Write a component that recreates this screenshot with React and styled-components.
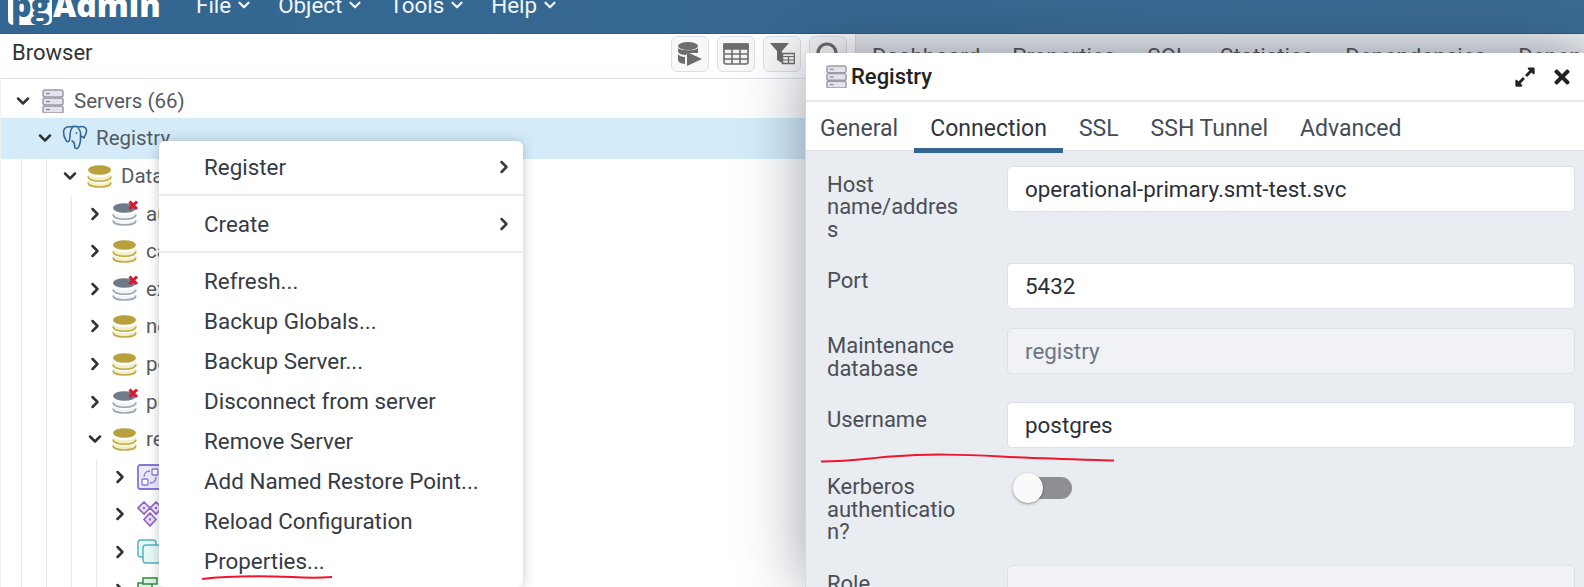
import React from "react";
import styled, { createGlobalStyle } from "styled-components";
import { ChevronDown, ChevronRight } from "lucide-react";
import { FaExpandAlt, FaTimes } from "react-icons/fa";

const GlobalStyle = createGlobalStyle`
  html, body {
    margin: 0;
    padding: 0;
    background: #fff;
    font-family: Roboto, "Liberation Sans", sans-serif;
  }
`;

const ServerIcon = ({ size = 24 }) => (
  <svg width={size} height={size} viewBox="0 0 24 24">
    {[1, 9, 17].map((y) => (
      <g key={y}>
        <rect x="2" y={y} width="20" height="7" rx="2" fill="#e4e2ea" stroke="#9d9bab" strokeWidth="1.5" />
        <path d={`M5 ${y + 3.5}h4`} stroke="#8d8b9b" strokeWidth="1.3" />
      </g>
    ))}
  </svg>
);

const ElephantIcon = () => (
  <svg width="26" height="26" viewBox="0 0 26 26" fill="none" stroke="#336791" strokeWidth="1.600">
    <path d="M9 2C5 1 1.500 3 1.500 7c0 3 1.500 7 3 9 1 1.200 2.500.5 3-1 .4-1.500.5-3 .5-4" />
    <path d="M9 2c2-.8 5-.8 8 0 3-1.200 7-.5 7.500 3 .3 3-1.500 6-3 8.500" />
    <path d="M8 11c0-4 .5-7 3-9" />
    <path d="M16 3c2 2 3 5 2.500 8-.2 2 .5 4-.5 7-.6 2-1 5-3 5.500-2 .4-2.500-1.500-2.500-4 0-2-1-3-3-4" />
    <path d="M18.500 11c1.500 1 3 1.500 4 1" />
    <circle cx="14.500" cy="8" r=".9" fill="#336791" stroke="none" />
  </svg>
);

const DatabaseIcon = ({ off }) => {
  const top = off ? "#6f7b89" : "#b8a03c";
  const band = off ? "#f1f3f6" : "#f4eec6";
  const edge = off ? "#99a3af" : "#bfa93f";
  return (
    <svg width="26" height="24" viewBox="0 0 26 24" fill="none" overflow="visible">
      <ellipse cx="12.500" cy="6" rx="11.500" ry="4.800" fill={top} />
      <path d="M1 9v3.500c0 2.800 5 4.800 11.500 4.800S24 15.300 24 12.500V9c-1 3-5.500 4.300-11.500 4.300S2 12 1 9z" fill={band} />
      <path d="M1 12.500c0 2.800 5 4.800 11.500 4.800S24 15.300 24 12.500" stroke={edge} strokeWidth="1.600" />
      <path d="M1 15.500v3c0 2.800 5 4.500 11.500 4.500S24 21.300 24 18.500v-3c-1 3-5.500 3.800-11.500 3.800S2 18.500 1 15.500z" fill={band} />
      <path d="M1 18.500c0 2.800 5 4.500 11.500 4.500S24 21.300 24 18.500" stroke={edge} strokeWidth="1.600" />
      {off && <path d="M17.500 -.5l7.500 7.500M25 -.5l-7.500 7.500" stroke="#d7152f" strokeWidth="3" />}
    </svg>
  );
};

const CastIcon = () => (
  <svg width="26" height="26" viewBox="0 0 26 26" fill="none" stroke="#8478d3" strokeWidth="1.300">
    <rect x="1" y="1" width="24" height="24" rx="2" fill="#ece9fb" strokeWidth="1.800" />
    <rect x="5" y="15" width="6" height="6" rx="1" fill="#fff" />
    <rect x="15" y="5" width="6" height="6" rx="1" fill="#fff" />
    <path d="M7 13c0-4 3-6 6-6M19 13c0 4-3 6-6 6" />
  </svg>
);

const DiamondIcon = () => (
  <svg width="26" height="26" viewBox="0 0 26 26" fill="#e9def7" stroke="#9060c4" strokeWidth="1.600">
    <path d="M7 1l6 6-6 6-6-6zM19 1l6 6-6 6-6-6zM13 12l6 6.500-6 6.500-6-6.500z" />
    <path d="M6 6h2v2H6zM18 6h2v2h-2zM12 17.500h2v2h-2z" fill="#9060c4" stroke="none" />
  </svg>
);

const WindowsIcon = () => (
  <svg width="26" height="26" viewBox="0 0 26 26" fill="#e6f8f6" stroke="#55b3bd" strokeWidth="1.500">
    <rect x="1" y="1" width="18" height="17" rx="3" />
    <rect x="6" y="6" width="19" height="18" rx="3" />
  </svg>
);

const TablesIcon = () => (
  <svg width="26" height="26" viewBox="0 0 26 26" fill="#dff2e0" stroke="#3e8d4f" strokeWidth="1.600">
    <rect x="1" y="6" width="14" height="6" />
    <rect x="6" y="1" width="14" height="6" />
    <rect x="8" y="12" width="17" height="7" />
  </svg>
);

const QueryToolIcon = () => (
  <svg width="26" height="26" viewBox="0 0 26 26" fill="#6d6d6d">
    <ellipse cx="11" cy="5" rx="10" ry="4" />
    <path d="M1 7c2 3 18 3 20 0v5H10l-1 2c-4 0-7-1-8-3zM1 13c1 2 4 3 7 3v7c-4-.3-7-2-7-4zM10 11l15 7-15 7z" />
  </svg>
);

const TableIcon = () => (
  <svg width="26" height="26" viewBox="0 0 26 26" fill="none" stroke="#6d6d6d" strokeWidth="1.600">
    <rect x="1" y="3" width="24" height="20" rx="2" fill="#f3f3f3" />
    <path d="M1 3h24v5H1z" fill="#6d6d6d" />
    <path d="M1 13h24M1 18h24M9 8v15M17 8v15" />
  </svg>
);

const FilterIcon = () => (
  <svg width="26" height="26" viewBox="0 0 26 26">
    <path d="M1 2h19l-7 8v12l-5-3v-9z" fill="#6d6d6d" />
    <rect x="13.500" y="12.500" width="12" height="10" fill="#f3f3f3" stroke="#6d6d6d" strokeWidth="1.500" />
    <path d="M13.500 15.500h12M13.500 19h12M19.500 15.500v7" stroke="#6d6d6d" strokeWidth="1.200" />
  </svg>
);

const SearchIcon = () => (
  <svg width="26" height="26" viewBox="0 0 26 26" fill="none" stroke="#6d6d6d" strokeWidth="3.200">
    <circle cx="12" cy="12" r="9" />
    <path d="M19 19l6 6" />
  </svg>
);

const Page = styled.div`
  position: relative;
  width: 1584px;
  height: 587px;
  overflow: hidden;
  background: #fff;
`;

const Header = styled.header`
  height: 33px;
  background: linear-gradient(90deg, #326690, #3b6b94);
  border-bottom: 1px solid #2c5b80;
  display: flex;
  align-items: flex-end;
  overflow: hidden;
  padding-left: 8px;
`;

const Logo = styled.div`
  display: flex;
  align-items: flex-end;
  font-family: "Open Sans", Roboto, sans-serif;
  font-weight: 800;
  font-size: 32px;
  line-height: 40px;
  color: #fff;
  margin-bottom: 8px;
  width: 188px;
`;

const LogoBox = styled.span`
  background: #fff;
  color: #326690;
  border-radius: 5px;
  padding: 0 3px;
  margin-right: 1px;
  line-height: 40px;
  letter-spacing: -1px;
`;

const Nav = styled.nav`
  display: flex;
  gap: 25px;
  margin-bottom: 16px;
`;

const NavItem = styled.div`
  display: flex;
  align-items: center;
  gap: 4px;
  color: #f2f5f8;
  font-size: 22.400px;
  line-height: 24px;
`;

const Workspace = styled.div`
  display: flex;
  height: 553px;
`;

const BrowserPane = styled.section`
  width: 855px;
  flex: none;
  border-right: 1px solid #d5d9e0;
  display: flex;
  flex-direction: column;
`;

const PaneTitleBar = styled.div`
  height: 45px;
  flex: none;
  box-sizing: border-box;
  display: flex;
  align-items: center;
  justify-content: space-between;
  padding: 0 8px 5px 12px;
  border-bottom: 1px solid #dde1e7;
  font-size: 22px;
  color: #333;
`;

const PaneTitle = styled.span`
  margin-bottom: 2px;
`;

const ToolGroup = styled.div`
  display: flex;
  gap: 8px;
`;

const ToolButton = styled.div`
  width: 38px;
  height: 36px;
  box-sizing: border-box;
  border: 1px solid #dde1e7;
  border-radius: 6px;
  background: #f8f8f8;
  display: flex;
  align-items: center;
  justify-content: center;
`;

const Tree = styled.div`
  position: relative;
  flex: 1;
  overflow: hidden;
  padding-top: 3px;
  border-left: 1px solid #eef0f4;
`;

const Guide = styled.div`
  position: absolute;
  left: ${(p) => p.$x}px;
  top: ${(p) => p.$top}px;
  bottom: 0;
  width: 1px;
  background: #e6e9f0;
`;

const TreeRow = styled.div`
  position: relative;
  height: 37.6px;
  display: flex;
  align-items: center;
  padding-left: ${(p) => (p.$depth === 0 ? 10 : 7 + p.$depth * 25)}px;
  font-size: 20.500px;
  color: #555a62;
  background: ${(p) => (p.$selected ? "#d4ecfa" : "transparent")};
  box-shadow: ${(p) => (p.$selected ? "0 -2px 0 #d4ecfa, 0 2px 0 #d4ecfa" : "none")};
`;

const Caret = styled.span`
  width: 24px;
  flex: none;
  display: flex;
  justify-content: center;
  color: #333;
`;

const NodeIcon = styled.span`
  width: 26px;
  height: 26px;
  flex: none;
  margin-left: 5px;
  display: flex;
  align-items: center;
  justify-content: center;
`;

const NodeLabel = styled.span`
  margin-left: 8px;
  white-space: nowrap;
`;

const TabPane = styled.section`
  flex: 1;
  min-width: 0;
`;

const PaneTabs = styled.div`
  height: 45px;
  display: flex;
  overflow: hidden;
  background: linear-gradient(#eceef1, #dadde3);
  font-size: 22.400px;
  color: #555;
  white-space: nowrap;
`;

const PaneTab = styled.div`
  padding: 9px 16px 0;
`;

const ContextMenu = styled.div`
  position: absolute;
  left: 159px;
  top: 141px;
  width: 364px;
  height: 446px;
  box-sizing: border-box;
  padding-top: 6px;
  background: #fff;
  border-radius: 6px;
  box-shadow: 0 0 12px rgba(40, 50, 70, 0.28);
  font-size: 22.400px;
  color: #363b43;
`;

const MenuItem = styled.div`
  height: 40px;
  display: flex;
  align-items: center;
  justify-content: space-between;
  padding: 0 9px 0 45px;
`;

const MenuDivider = styled.div`
  height: 2px;
  margin: 7px 0 8px;
  background: #e9ebf0;
`;

const Dialog = styled.div`
  position: absolute;
  left: 805px;
  top: 53px;
  width: 779px;
  height: 534px;
  background: #e9ecf1;
  border-left: 1px solid #d3d7de;
  box-shadow: 0 0 60px rgba(30, 40, 60, 0.45);
  display: flex;
  flex-direction: column;
`;

const DialogHeader = styled.div`
  height: 49px;
  flex: none;
  box-sizing: border-box;
  background: #fff;
  border-bottom: 2px solid #e4e7ec;
  display: flex;
  align-items: center;
  padding: 0 12px 0 19px;
  gap: 3px;
  font-size: 22px;
  font-weight: 500;
  color: #222;
`;

const DialogTitle = styled.span`
  flex: 1;
`;

const HeaderAction = styled.span`
  display: flex;
  margin-left: 12px;
  color: #222;
`;

const DialogTabs = styled.div`
  height: 49px;
  flex: none;
  box-sizing: border-box;
  background: #fff;
  border-bottom: 1px solid #dfe2e8;
  display: flex;
  padding-top: 4px;
`;

const DialogTab = styled.div`
  height: 40px;
  box-sizing: content-box;
  padding: 2px 16px 0;
  margin-bottom: -2px;
  display: flex;
  align-items: center;
  font-size: 23px;
  color: ${(p) => (p.$active ? "#2f3540" : "#464c55")};
  border-bottom: ${(p) => (p.$active ? "5px solid #326690" : "5px solid transparent")};

  &:first-child {
    margin-left: -2px;
  }
`;

const Form = styled.div`
  display: flex;
  flex-direction: column;
  gap: 19px;
  padding: 15px 10px 0 21px;
`;

const FormRow = styled.div`
  display: grid;
  grid-template-columns: 180px 1fr;
  min-height: ${(p) => p.$minHeight || 46}px;
`;

const FieldLabel = styled.label`
  width: 134px;
  padding: 7.500px 0 2.500px;
  font-size: 22px;
  line-height: 22.500px;
  color: #4a4f57;
  overflow-wrap: anywhere;
`;

const Field = styled.div`
  height: 46px;
  box-sizing: border-box;
  padding: 0 17px;
  display: flex;
  align-items: center;
  border: 1px solid #dde1e7;
  border-radius: 5px;
  font-size: 22.400px;
  background: ${(p) => (p.$disabled ? "#f0f2f6" : "#fff")};
  color: ${(p) => (p.$disabled ? "#6c7580" : "#2a3038")};
`;

const SwitchWrap = styled.div`
  position: relative;
  width: 65px;
  height: 30px;
  margin-top: 4px;
  display: flex;
  align-items: center;
  justify-content: flex-end;
`;

const SwitchTrack = styled.div`
  width: 33px;
  height: 22px;
  background: #8e8f93;
  border-radius: 0 11px 11px 0;
`;

const SwitchKnob = styled.div`
  position: absolute;
  left: 6px;
  top: 0;
  width: 30px;
  height: 30px;
  border-radius: 50%;
  background: #fafafa;
  box-shadow: 0 1px 3px rgba(0, 0, 0, 0.4);
`;

const Scribble = styled.svg`
  position: absolute;
  left: 0;
  top: 0;
  pointer-events: none;
`;

const navItems = ["File", "Object", "Tools", "Help"];

const treeRows = [
  { depth: 0, open: true, icon: <ServerIcon />, label: "Servers (66)" },
  { depth: 1, open: true, icon: <ElephantIcon />, label: "Registry", selected: true },
  { depth: 2, open: true, icon: <DatabaseIcon />, label: "Databases" },
  { depth: 3, icon: <DatabaseIcon off />, label: "auth" },
  { depth: 3, icon: <DatabaseIcon />, label: "catalog" },
  { depth: 3, icon: <DatabaseIcon off />, label: "export" },
  { depth: 3, icon: <DatabaseIcon />, label: "news" },
  { depth: 3, icon: <DatabaseIcon />, label: "postgres" },
  { depth: 3, icon: <DatabaseIcon off />, label: "public" },
  { depth: 3, open: true, icon: <DatabaseIcon />, label: "registry" },
  { depth: 4, icon: <CastIcon /> },
  { depth: 4, icon: <DiamondIcon /> },
  { depth: 4, icon: <WindowsIcon /> },
  { depth: 4, icon: <TablesIcon /> },
];

const paneTabs = ["Dashboard", "Properties", "SQL", "Statistics", "Dependencies", "Dependents"];
const dialogTabs = ["General", "Connection", "SSL", "SSH Tunnel", "Advanced"];

const App = () => {
  return (
    <Page>
      <GlobalStyle />
      <Header>
        <Logo>
          <LogoBox>pg</LogoBox>Admin
        </Logo>
        <Nav>
          {navItems.map((item) => (
            <NavItem key={item}>
              {item}
              <ChevronDown size={18} strokeWidth={3} />
            </NavItem>
          ))}
        </Nav>
      </Header>

      <Workspace>
        <BrowserPane>
          <PaneTitleBar>
            <PaneTitle>Browser</PaneTitle>
            <ToolGroup>
              <ToolButton>
                <QueryToolIcon />
              </ToolButton>
              <ToolButton>
                <TableIcon />
              </ToolButton>
              <ToolButton>
                <FilterIcon />
              </ToolButton>
              <ToolButton>
                <SearchIcon />
              </ToolButton>
            </ToolGroup>
          </PaneTitleBar>
          <Tree>
            {treeRows.map((row, i) => (
              <TreeRow key={i} $depth={row.depth} $selected={row.selected}>
                <Caret>
                  {row.open ? (
                    <ChevronDown size={20} strokeWidth={3} />
                  ) : (
                    <ChevronRight size={20} strokeWidth={3} />
                  )}
                </Caret>
                <NodeIcon>{row.icon}</NodeIcon>
                {row.label && <NodeLabel>{row.label}</NodeLabel>}
              </TreeRow>
            ))}
            <Guide $x={20} $top={41} />
            <Guide $x={45} $top={80} />
            <Guide $x={70} $top={117} />
            <Guide $x={95} $top={380} />
          </Tree>
        </BrowserPane>

        <TabPane>
          <PaneTabs>
            {paneTabs.map((tab) => (
              <PaneTab key={tab}>{tab}</PaneTab>
            ))}
          </PaneTabs>
        </TabPane>
      </Workspace>

      <ContextMenu>
        <MenuItem>
          Register
          <ChevronRight size={20} strokeWidth={3} />
        </MenuItem>
        <MenuDivider />
        <MenuItem>
          Create
          <ChevronRight size={20} strokeWidth={3} />
        </MenuItem>
        <MenuDivider />
        <MenuItem>Refresh...</MenuItem>
        <MenuItem>Backup Globals...</MenuItem>
        <MenuItem>Backup Server...</MenuItem>
        <MenuItem>Disconnect from server</MenuItem>
        <MenuItem>Remove Server</MenuItem>
        <MenuItem>Add Named Restore Point...</MenuItem>
        <MenuItem>Reload Configuration</MenuItem>
        <MenuItem>Properties...</MenuItem>
      </ContextMenu>

      <Dialog>
        <DialogHeader>
          <ServerIcon size={23} />
          <DialogTitle>Registry</DialogTitle>
          <HeaderAction>
            <FaExpandAlt size={22} />
          </HeaderAction>
          <HeaderAction>
            <FaTimes size={22} />
          </HeaderAction>
        </DialogHeader>
        <DialogTabs>
          {dialogTabs.map((tab) => (
            <DialogTab key={tab} $active={tab === "Connection"}>
              {tab}
            </DialogTab>
          ))}
        </DialogTabs>
        <Form>
          <FormRow>
            <FieldLabel>Host name/address</FieldLabel>
            <Field>operational-primary.smt-test.svc</Field>
          </FormRow>
          <FormRow>
            <FieldLabel>Port</FieldLabel>
            <Field>5432</Field>
          </FormRow>
          <FormRow>
            <FieldLabel>Maintenance database</FieldLabel>
            <Field $disabled>registry</Field>
          </FormRow>
          <FormRow $minHeight={48}>
            <FieldLabel>Username</FieldLabel>
            <Field>postgres</Field>
          </FormRow>
          <FormRow>
            <FieldLabel>Kerberos authentication?</FieldLabel>
            <SwitchWrap>
              <SwitchTrack />
              <SwitchKnob />
            </SwitchWrap>
          </FormRow>
          <FormRow>
            <FieldLabel>Role</FieldLabel>
            <Field $disabled />
          </FormRow>
        </Form>
      </Dialog>

      <Scribble width="1584" height="587" viewBox="0 0 1584 587" fill="none" stroke="#f0142d" strokeWidth="2">
        <path d="M821 461.500c30 0 45-3 70-5 40-3 70-2 110 0 40 2 80 3 113 4" />
        <path d="M202 579c25-3 60-3 90-2 15 1 28 1 40 0" />
      </Scribble>
    </Page>
  );
};

export default App;
